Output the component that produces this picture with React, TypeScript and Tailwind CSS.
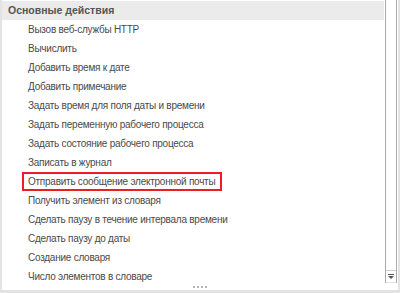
import React from "react";

const items = [
  "Вызов веб-службы HTTP",
  "Вычислить",
  "Добавить время к дате",
  "Добавить примечание",
  "Задать время для поля даты и времени",
  "Задать переменную рабочего процесса",
  "Задать состояние рабочего процесса",
  "Записать в журнал",
  "Отправить сообщение электронной почты",
  "Получить элемент из словаря",
  "Сделать паузу в течение интервала времени",
  "Сделать паузу до даты",
  "Создание словаря",
  "Число элементов в словаре",
];

export default function App() {
  return (
    <div
      className="relative flex h-[293px] w-[400px] flex-col bg-white text-[#4a4a4a]"
      style={{ fontFamily: '"Liberation Sans", Arial, sans-serif' }}
    >
      <div className="flex h-[290px]">
        <div className="w-[2px] bg-[#e3e3e3]" />
        <div className="flex w-[382px] flex-col">
          <div className="mt-[1px] flex h-[19px] items-center bg-[#ebebeb] pl-[6px] text-[10.5px] font-bold text-[#555]">
            Основные действия
          </div>
          {items.map((t, i) =>
            i === 8 ? (
              <div
                key={t}
                className="ml-[20px] flex h-[19px] w-[200px] items-center whitespace-nowrap border-2 border-[#ee1c25] pl-[4px] text-[10px] tracking-[-0.25px]"
              >
                {t}
              </div>
            ) : (
              <div
                key={t}
                className="flex h-[19px] items-center whitespace-nowrap pl-[26px] text-[10px] tracking-[-0.25px]"
              >
                {t}
              </div>
            )
          )}
        </div>
        <div className="w-[1px]" />
        <div className="flex h-[283px] w-[12px] flex-col border-x border-[#ababab]">
          <div className="flex-1" />
          <div className="flex h-[13px] items-center justify-center border-t border-[#cfcfcf] border-b border-b-[#e3e3e3]">
            <svg width="6" height="5" viewBox="0 0 6 5">
              <rect x="0" y="0" width="6" height="1" fill="#555" />
              <polygon points="0,2 6,2 3,5" fill="#555" />
            </svg>
          </div>
        </div>
        <div className="w-[1px]" />
        <div className="w-[2px] bg-[#e3e3e3]" />
      </div>
      <div className="h-[3px] bg-[#e3e3e3]" />
      <div className="absolute left-[193px] top-[286px] flex gap-[2px]">
        <div className="h-[2px] w-[2px] bg-[#b5b5b5]" />
        <div className="h-[2px] w-[2px] bg-[#b5b5b5]" />
        <div className="h-[2px] w-[2px] bg-[#b5b5b5]" />
        <div className="h-[2px] w-[2px] bg-[#b5b5b5]" />
      </div>
    </div>
  );
}
